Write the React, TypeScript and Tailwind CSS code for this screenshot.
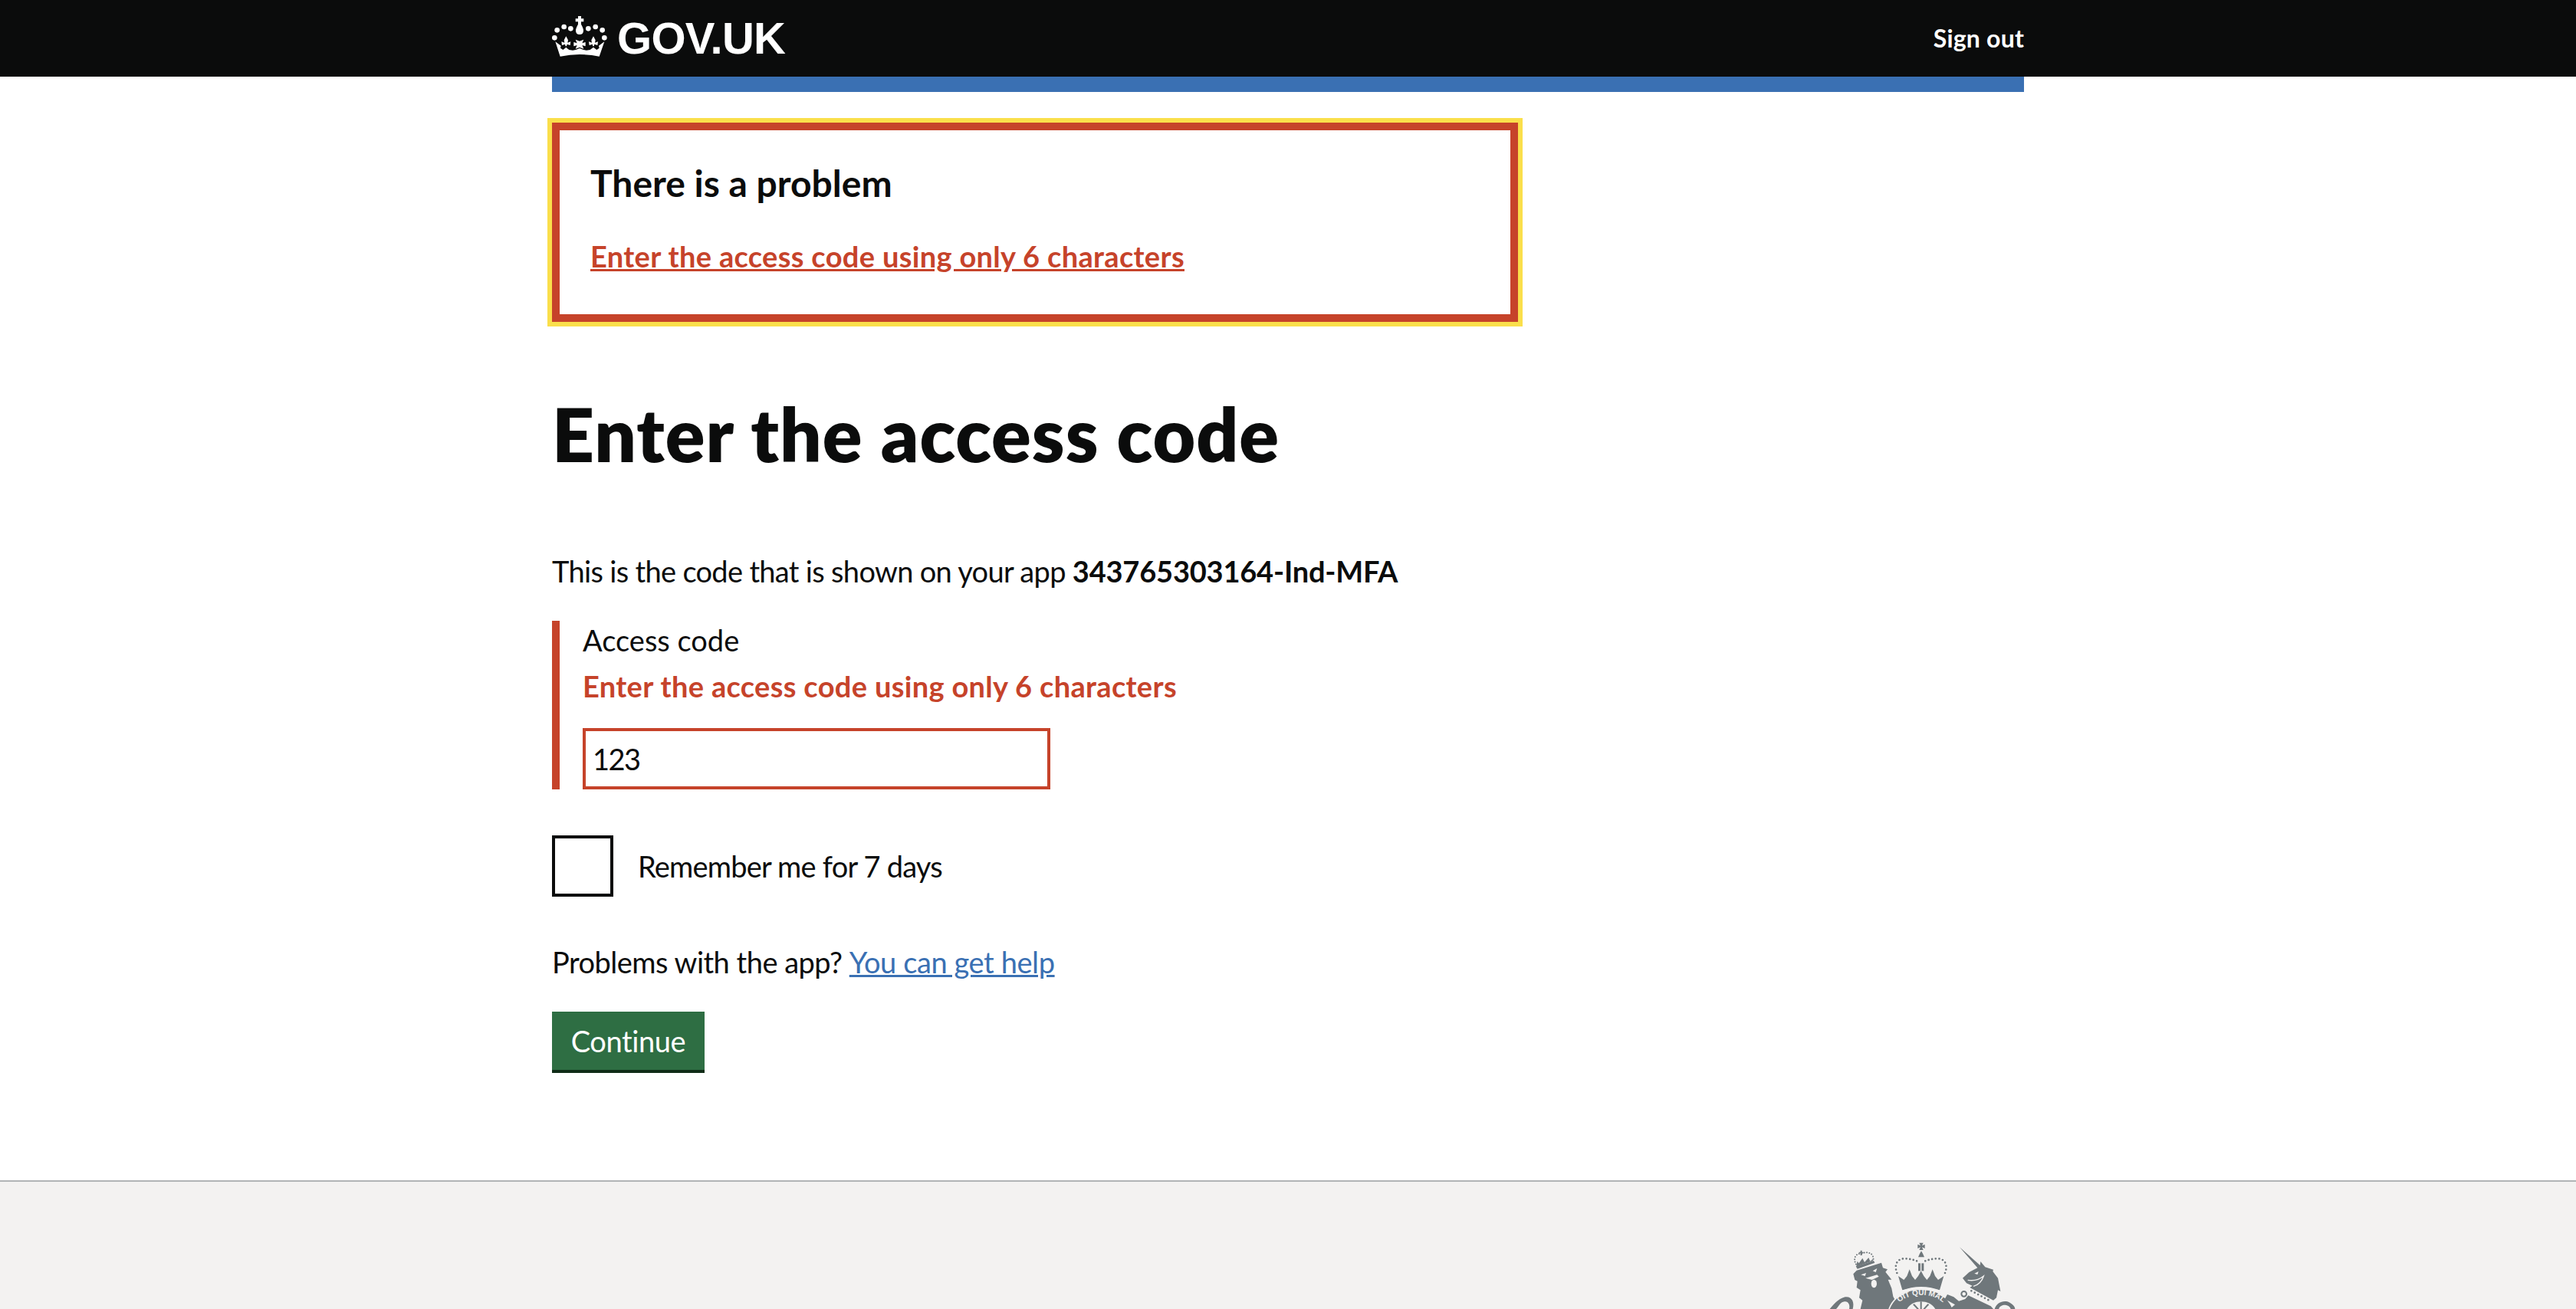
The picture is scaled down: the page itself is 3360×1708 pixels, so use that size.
import React from "react";

const ERROR = "Enter the access code using only 6 characters";
const BG = "#f3f2f1";

function CrownLogo() {
  return (
    <svg viewBox="0 0 270 210" className="w-[90px] h-[70px] shrink-0 -ml-[5px]" fill="#fff">
      {/* jewels */}
      <circle cx="25" cy="103" r="10" />
      <circle cx="35" cy="73" r="10" />
      <circle cx="62" cy="60" r="10" />
      <circle cx="88" cy="67" r="10" />
      <circle cx="157" cy="67" r="10" />
      <circle cx="185" cy="60" r="10" />
      <circle cx="212" cy="73" r="10" />
      <circle cx="220" cy="103" r="10" />
      {/* orb and cross */}
      <path d="M117 18H129V28H139V40H129V50Q138 66 138 74Q138 90 123 90Q108 90 108 74Q108 66 117 50V40H107V28H117Z" />
      {/* fleurs and centre cross */}
      <path d="M70 97L78 112L76 122L88 118L86 132L74 128L72 136L68 136L66 128L54 132L52 118L64 122L62 112Z" />
      <path d="M177 97L185 112L183 122L195 118L193 132L181 128L179 136L175 136L173 128L161 132L159 118L171 122L169 112Z" />
      <path d="M107 110L123 116L139 110L133 124L146 120V136L133 132L139 146L123 140L107 146L113 132L100 136V120L113 124Z" />
      {/* band */}
      <path d="M28 118L50 134L48 143L58 150L66 144L70 140L74 144L82 150L96 152L108 150L123 144L138 150L150 152L164 150L172 144L177 140L182 144L190 150L200 143L198 134L220 118L200 176Q123 160 47 176Z" />
    </svg>
  );
}

function Crest() {
  return (
    <svg viewBox="0 15 780 264" className="w-[260px] h-[88px]" fill="#6f777b">
      {/* lion crown */}
      <path d="M128 112C108 85 118 62 143 62C170 52 195 60 190 92" fill="none" stroke="#6f777b" strokeWidth="6" strokeLinecap="round" strokeDasharray="0 10" />
      <path d="M140 50h6v6h6v5h-6v8h-6v-8h-6v-5h6z" />
      <path d="M124 108L128 92L134 100L148 80L156 96L172 78L178 92L188 84L190 90L126 112z" />
      <path d="M122 112L192 90L196 98L128 122Z" />
      {/* lion */}
      <path d="M112 142L125 128L222 98L228 118L246 124L238 134L262 164L248 164L262 198L268 230L285 262L262 279H140L148 245L135 235L140 205L125 195L128 170L118 165Z" />
      <path d="M142 145L162 138L158 150Z" fill={BG} />
      <path d="M188 130L205 120L200 135Z" fill={BG} />
      <path d="M160 158L205 145L212 152L185 165Z" fill={BG} />
      <ellipse cx="193" cy="180" rx="11" ry="16" fill={BG} />
      {/* lion tail */}
      <path d="M20 279C35 262 50 240 80 232C105 228 118 250 110 279H96C100 262 92 248 78 250C60 252 55 270 45 279Z" />

      {/* royal crown */}
      <path d="M370 20H386L381 31L392 26V42L381 37L386 48H370L375 37L364 42V26L375 31Z" />
      <path d="M366 76H390L384 62L378 52L372 62Z" />
      <rect x="366" y="100" width="9" height="30" />
      <rect x="379" y="100" width="9" height="30" />
      <path d="M283 138C270 105 285 80 315 82C335 82 352 88 372 95" fill="none" stroke="#6f777b" strokeWidth="8" strokeLinecap="round" strokeDasharray="0 14" />
      <path d="M471 138C484 105 469 80 439 82C419 82 402 88 382 95" fill="none" stroke="#6f777b" strokeWidth="8" strokeLinecap="round" strokeDasharray="0 14" />
      <path d="M288 150L310 165L322 150L332 124L342 150L354 165L366 150L377 130L388 150L400 165L412 150L422 124L432 150L444 165L466 150L450 205Q377 185 304 205Z" />

      {/* garter */}
      <path d="M255 279C270 225 325 205 377 205C429 205 484 225 500 279Z" />
      <path d="M300 212Q377 180 455 212" fill="none" stroke={BG} strokeWidth="8" />
      <path d="M252 279C268 240 290 228 312 218" fill="none" stroke={BG} strokeWidth="5" />
      <path d="M503 279C487 240 465 228 443 218" fill="none" stroke={BG} strokeWidth="5" />
      <path id="garter-arc" d="M272 279C295 238 335 224 377 224C419 224 460 238 483 279" fill="none" />
      <text fontFamily="'Liberation Sans', sans-serif" fontWeight="700" fontSize="30" fill={BG} textAnchor="middle">
        <textPath href="#garter-arc" startOffset="50%">OIT QUI MAL</textPath>
      </text>
      <path d="M322 279C335 258 355 250 377 250C399 250 420 258 433 279Z" fill={BG} />
      <path d="M374 250h6v29h-6zM345 262l6-3 18 20h-8zM409 262l-6-3-18 20h8z" />

      {/* unicorn */}
      <g transform="translate(360 0)">
        <path d="M168 37L248 108L250 93L268 115L300 125L298 132L318 158L328 210L318 205L312 235L300 245L208 195L218 188L195 178L180 158L205 135L238 118Z" />
        <path d="M200 166Q235 172 262 150Q252 182 222 190" fill="none" stroke={BG} strokeWidth="4" />
        <path d="M226 140L242 132L238 144Z" fill={BG} />
        <path d="M205 198L302 252L298 266L203 220Z" fill={BG} />
        <path d="M214 208L292 250" fill="none" stroke="#6f777b" strokeWidth="8" strokeLinecap="round" strokeDasharray="0 15" />
        <path d="M202 226L290 268L300 279H130L150 262L110 240L120 222L145 232L165 248L190 240Z" />
        <circle cx="185" cy="220" r="10" fill="none" stroke="#6f777b" strokeWidth="6" />
        <path d="M305 279C312 255 335 245 355 250C375 258 385 270 385 279H368C365 268 350 262 338 264C325 268 322 275 322 279Z" />
      </g>
    </svg>
  );
}

export default function App() {
  return (
    <div className="h-[1708px] overflow-hidden flex flex-col bg-white text-[#0b0c0c] font-['Lato',sans-serif]">
      <header className="bg-[#0b0c0c] h-[100px]">
        <div className="w-[1920px] mx-auto h-full flex items-center justify-between">
          <div className="flex items-center">
            <CrownLogo />
            <span className="text-white font-bold text-[58px] leading-none tracking-[-0.7px] font-['Liberation_Sans',sans-serif]">GOV.UK</span>
          </div>
          <a className="text-white font-bold text-[32px] tracking-[0.2px]">Sign out</a>
        </div>
      </header>

      <main className="w-[1920px] mx-auto flex-1">
        <div className="h-5 bg-[#3a70b3]" />

        {/* error summary */}
        <div className="mt-10 w-[1260px] h-[260px] border-[10px] border-[#c6432a] outline-[6px] outline-solid outline-[#fadf4b] px-10 pt-[39px]">
          <h2 className="text-[48px] leading-[60px] font-bold">There is a problem</h2>
          <a className="block mt-[40px] text-[38px] leading-[50px] font-bold tracking-[0.33px] text-[#c6432a] underline">{ERROR}</a>
        </div>

        <h1 className="mt-[86px] text-[96px] leading-[120px] font-extrabold tracking-[1px]">Enter the access code</h1>

        <p className="mt-[94px] text-[38px] leading-[50px] tracking-[-0.68px]">
          This is the code that is shown on your app <b className="tracking-[-0.2px]">343765303164-Ind-MFA</b>
        </p>

        {/* form group with error */}
        <div className="mt-[40px] border-l-[10px] border-[#c6432a] pl-[30px] h-[220px]">
          <label className="block text-[38px] leading-[50px]">Access code</label>
          <div className="mt-[10px] text-[38px] leading-[50px] font-bold tracking-[0.33px] text-[#c6432a]">{ERROR}</div>
          <div className="mt-[30px] w-[610px] h-[80px] border-4 border-[#c6432a] flex items-center px-[9px] text-[38px] tracking-[-1.5px]">123</div>
        </div>

        <div className="mt-[60px] flex items-center gap-8">
          <div className="w-20 h-20 border-4 border-[#0b0c0c]" />
          <span className="text-[38px] tracking-[-0.8px]">Remember me for 7 days</span>
        </div>

        <p className="mt-[60px] text-[38px] leading-[50px] tracking-[-0.5px]">
          Problems with the app? <a className="text-[#3a70b3] underline tracking-[-0.4px]">You can get help</a>
        </p>

        <button className="mt-[40px] w-[199px] h-20 bg-[#2e6e43] border-b-4 border-[#0f2c17] text-white text-[38px] tracking-[-0.4px] flex items-center justify-center">Continue</button>
      </main>

      <footer className="h-[168px] bg-[#f3f2f1] border-t-2 border-[#b1b4b6]">
        <div className="w-[1920px] mx-auto flex justify-end pt-[78px]">
          <Crest />
        </div>
      </footer>
    </div>
  );
}
